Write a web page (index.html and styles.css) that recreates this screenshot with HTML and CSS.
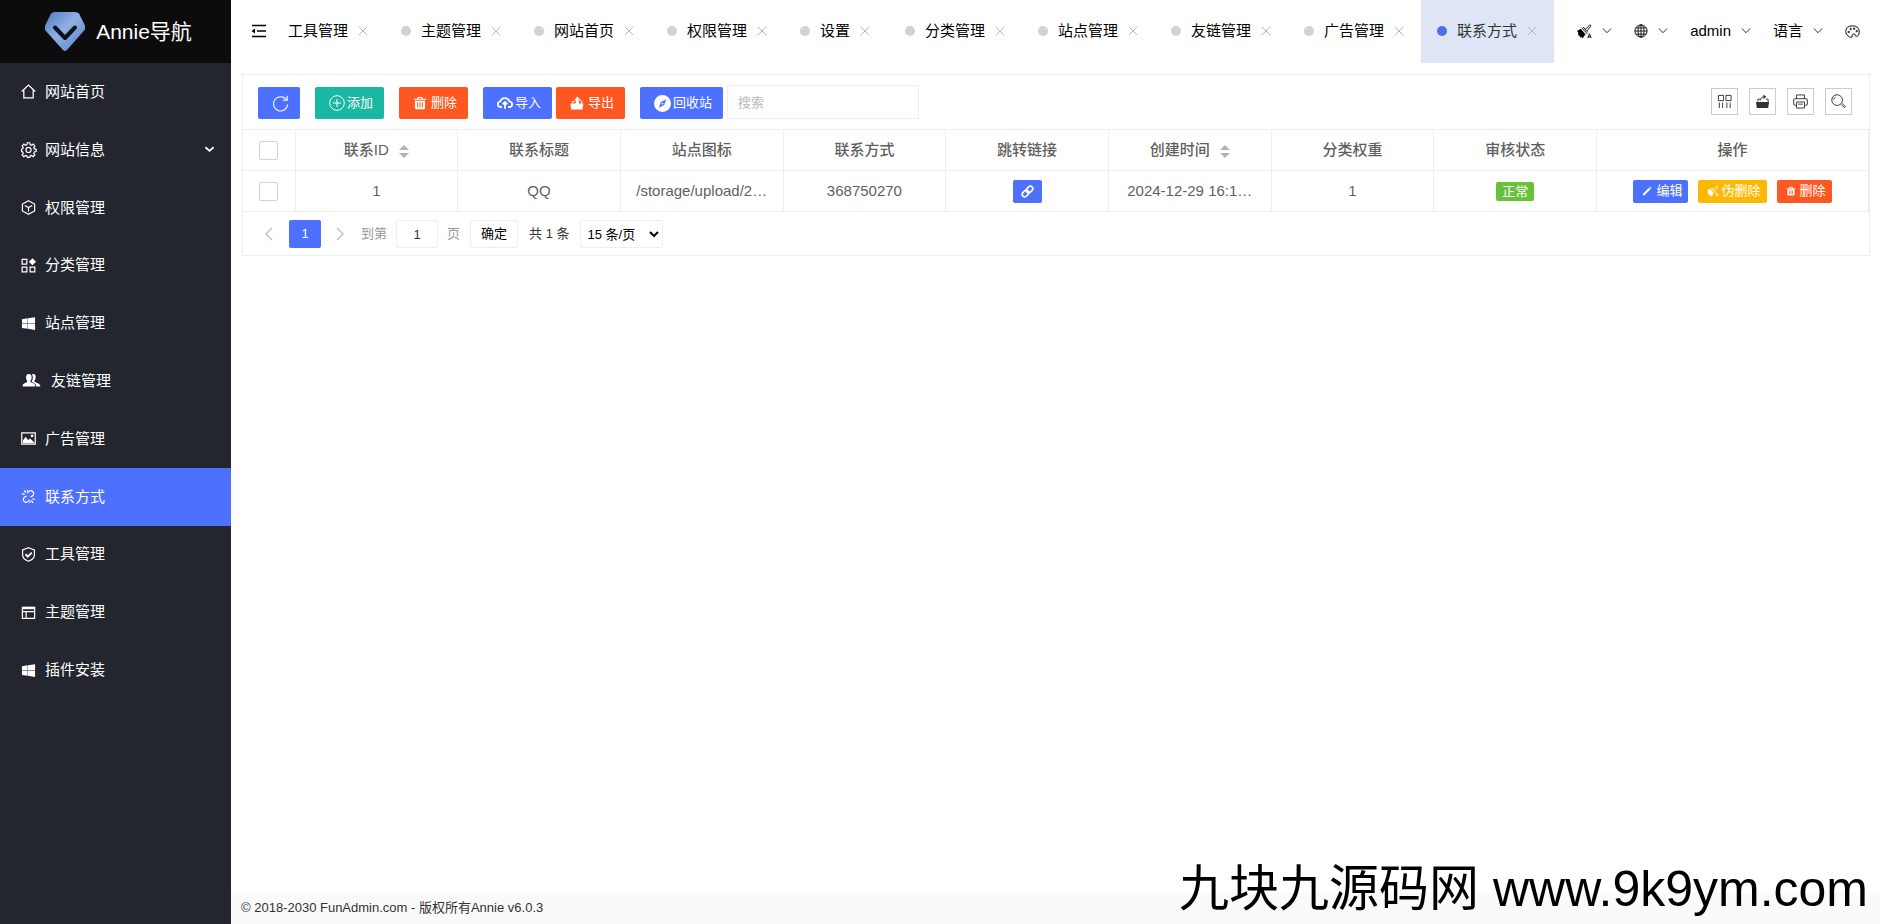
FILE: index.html
```html
<!DOCTYPE html>
<html lang="zh-CN">
<head>
<meta charset="utf-8">
<title>联系方式 - Annie导航</title>
<link rel="stylesheet" href="styles.css">
</head>
<body>
<svg class="sprite" aria-hidden="true">
  <defs>
    <linearGradient id="gem" x1="0" y1="0" x2="1" y2="1">
      <stop offset="0" stop-color="#4f78bd"/><stop offset=".45" stop-color="#8fb0e4"/><stop offset="1" stop-color="#5580c8"/>
    </linearGradient>
  </defs>
  <symbol id="i-close" viewBox="0 0 12 12"><path d="M1 1l10 10M11 1L1 11"/></symbol>
  <symbol id="i-down" viewBox="0 0 12 12"><path d="M1 3l5 5 5-5"/></symbol>
  <symbol id="i-win" viewBox="0 0 16 16"><path class="solid" d="M1 3.400l6-.9v5.200H1zM7.400 2.300L15 1.200v6.500H7.400zM1 8.200h6v5.400L1 12.700zM7.400 8.200H15v6.600l-7.600-1.200z"/></symbol>
  <symbol id="i-trash" viewBox="0 0 16 16"><path class="solid" fill-rule="evenodd" d="M5.500 1h5l.7 2H15v1.400H1V3h3.800zM6.600 2.200L6.300 3h3.400l-.3-.8zM2.200 5.300h11.600V14l-1 1H3.200l-1-1zM4.700 7v6h1.200V7zm2.700 0v6h1.200V7zm2.700 0v6h1.200V7z"/></symbol>
  <symbol id="i-export" viewBox="0 0 16 16"><path class="solid" d="M1 8.500h14.200v1.500l-1 5.500H1.500L.5 10z"/><path d="M3 9V6h2.500M11 5.500h2.500V9"/><path class="solid" d="M8.500.5l3.600 4H10v4.500H6.500V4.500H5z"/></symbol>
  <symbol id="i-brush" viewBox="0 0 16 16"><path class="solid" d="M0 7.500L4 5l5 6-3 4.500-1.500-2-.5 1.300-1.500-2.500-.8.8L1.500 11l-.7.300L1.400 9z"/><path d="M5 4l6 6.500M6.500 3.200l5 5.600M9 5.700L13.500 1q1.500 0 1 1.500L10.800 7.200"/><path d="M11.500 15l1.800-4.500L15 15M12 13.800h2.500"/></symbol>
</svg>

<div class="app">
  <aside class="sidebar">
    <a class="brand" href="#">
      <svg class="gem" viewBox="0 0 42 40"><path fill="url(#gem)" stroke="none" d="M10 0h22l3 1.500 6 12v4L23 38q-2 2-4 0L1 18v-4L7 1.500z"/><path class="tick" d="M11 15.500l10 10.500 10-10.500"/></svg>
      <span>Annie导航</span>
    </a>
    <nav class="menu">
      <a href="#"><svg class="ico" viewBox="0 0 16 16"><path d="M.8 8L8 1.200 15.200 8M3 6.500v8.300h10V6.500"/></svg><span>网站首页</span></a>
      <a href="#"><svg class="ico" viewBox="0 0 16 16"><path d="M6.700.8h2.600l.4 2 1.500.700 1.800-1.200 1.800 1.900-1.200 1.700.6 1.400 2 .4v2.500l-2 .4-.6 1.500 1.200 1.700-1.800 1.800-1.800-1.200-1.500.6-.4 1.500H6.700l-.4-1.500-1.500-.6L3 15.600l-1.800-1.800 1.200-1.700-.6-1.500-1.200-.4V7.700l1.200-.4.600-1.400L1.200 4.200 3 2.300l1.800 1.200 1.500-.7z"/><circle cx="8" cy="8.500" r="2.700"/></svg><span>网站信息</span><svg class="ico caret" viewBox="0 0 12 12"><path d="M1.500 3.500L6 7.500l4.500-4"/></svg></a>
      <a href="#"><svg class="ico" viewBox="0 0 16 16"><path d="M8 .8l6.500 3.500v7.400L8 15.200l-6.500-3.500V4.300zM4 5.800L8 8l4-2.200M8 8v4.500"/></svg><span>权限管理</span></a>
      <a href="#"><svg class="ico" viewBox="0 0 16 16"><path d="M1.200 1.500h5v5h-5zM1.200 9.700h5v5h-5zM9.700 9.700h5v5h-5z"/><path class="solid" d="M12.200.2L16 4l-3.800 3.800L8.400 4z"/></svg><span>分类管理</span></a>
      <a href="#"><svg class="ico"><use href="#i-win"/></svg><span>站点管理</span></a>
      <a class="wide" href="#"><svg class="ico" viewBox="0 0 20 16"><path class="solid" d="M1 14.500q0-3 2-3.500l3-1.500v-1Q4.700 7 4.700 4.700 4.700 1 7.700 1q3 0 3 3.700 0 2.300-1.300 3.800v1L12.500 11q2 .5 2 3.500zM11 1.200q4-1.200 4 3.200 0 2-1.300 3.600v1.300l3.300 1.500q3 .7 3 3.700h-4.500q0-3-2.300-3.800L11 9.300v-.7q2-4 0-7.400z"/></svg><span>友链管理</span></a>
      <a href="#"><svg class="ico" viewBox="0 0 16 16"><path d="M.8 2h14.400v12H.8z"/><path class="solid" d="M2 13v-3l3-4 2.500 3.500L9.700 8l4.300 4v1z"/><circle class="solid" cx="11.800" cy="5.200" r="1.400"/></svg><span>广告管理</span></a>
      <a class="on" href="#"><svg class="ico" viewBox="0 0 16 16"><path d="M7 4.500Q9 1 11.500 2q3 1.500 1.500 4.500-1 1.500-3 1.800M9 11.500Q7 15 4.500 14q-3-1.500-1.500-4.500Q4 8 6 7.700M1 5l3 .8M3.500 1.500L5.200 4M15 11.200l-3-.8M12.800 14.800L11 12.200M6.800 1l.1 2M9.500 15l-.1-2"/></svg><span>联系方式</span></a>
      <a href="#"><svg class="ico" viewBox="0 0 16 16"><path d="M8 .8l6.300 2.200v5.500q0 4.200-6.300 6.700-6.300-2.500-6.300-6.700V3z"/><path class="bold" d="M4.800 7.700l2.500 2.500 4.200-4.200"/></svg><span>工具管理</span></a>
      <a href="#"><svg class="ico" viewBox="0 0 16 16"><path d="M1.500 2.500h13v11.800h-13zM1.500 7h13M5.500 7v7"/><path class="solid" d="M1 2h14v2.500H1z"/></svg><span>主题管理</span></a>
      <a href="#"><svg class="ico"><use href="#i-win"/></svg><span>插件安装</span></a>
    </nav>
  </aside>

  <div class="page">
    <header class="topbar">
      <button class="fold" aria-label="收起菜单"><svg viewBox="0 0 16 14"><path d="M1 1.500h14M6 7h9M1 12.500h14"/><path class="solid" d="M.5 7L4 4.500v5z"/></svg></button>
      <nav class="tabs">
        <a href="#"><i></i>工具管理<svg class="x"><use href="#i-close"/></svg></a>
        <a href="#"><i></i>主题管理<svg class="x"><use href="#i-close"/></svg></a>
        <a href="#"><i></i>网站首页<svg class="x"><use href="#i-close"/></svg></a>
        <a href="#"><i></i>权限管理<svg class="x"><use href="#i-close"/></svg></a>
        <a href="#"><i></i>设置<svg class="x"><use href="#i-close"/></svg></a>
        <a href="#"><i></i>分类管理<svg class="x"><use href="#i-close"/></svg></a>
        <a href="#"><i></i>站点管理<svg class="x"><use href="#i-close"/></svg></a>
        <a href="#"><i></i>友链管理<svg class="x"><use href="#i-close"/></svg></a>
        <a href="#"><i></i>广告管理<svg class="x"><use href="#i-close"/></svg></a>
        <a class="on" href="#"><i></i>联系方式<svg class="x"><use href="#i-close"/></svg></a>
      </nav>
      <div class="tools">
        <button aria-label="清除缓存"><svg class="ico"><use href="#i-brush"/></svg><svg class="x"><use href="#i-down"/></svg></button>
        <button aria-label="站点"><svg class="ico globe" viewBox="0 0 16 16"><circle cx="8" cy="8" r="7"/><ellipse cx="8" cy="8" rx="3.500" ry="7"/><path d="M8 1v14M1 8h14M2 4.500h12M2 11.500h12"/></svg><svg class="x"><use href="#i-down"/></svg></button>
        <button>admin<svg class="x"><use href="#i-down"/></svg></button>
        <button>语言<svg class="x"><use href="#i-down"/></svg></button>
        <button aria-label="主题"><svg class="ico" viewBox="0 0 16 16"><path d="M3.500 13Q.8 11 .8 8q0-6 7.200-6 7.200 0 7.200 6.500 0 4-2.500 4.700-1.500.3-1.700-1-.3-2-2-1.700-1.500.3-1.300 2 .2 2-1.500 1.700-1.500-.2-2.700-1.200z"/><circle cx="4" cy="8.500" r=".8"/><circle cx="6" cy="5.300" r=".8"/><circle cx="9.700" cy="5" r=".8"/><circle cx="12.500" cy="7.500" r=".8"/></svg></button>
      </div>
    </header>

    <main>
      <section class="card">
        <div class="toolbar">
          <button class="btn blue" aria-label="刷新"><svg class="big" viewBox="0 0 16 16"><path d="M13.500 4.500A6.700 6.700 0 1 0 14.700 9M14.300.8v4.200h-4.200"/></svg></button>
          <button class="btn teal"><svg viewBox="0 0 16 16"><circle cx="8" cy="8" r="7.300"/><path d="M8 4v8M4 8h8"/></svg>添加</button>
          <button class="btn red"><svg class="mid"><use href="#i-trash"/></svg>删除</button>
          <div class="pair">
            <button class="btn blue"><svg viewBox="0 0 18 16"><path class="mid-line" d="M5.500 12.500H4.300Q1 12.300 1 9.300q0-2.500 2.800-3 1-3.800 5-3.800t5 3.800q3.200.5 3.200 3 0 3-3.300 3.200h-1.200M9 14.500V7.200M6.300 9.500L9 6.800l2.700 2.700"/></svg>导入</button>
            <button class="btn red"><svg class="mid"><use href="#i-export"/></svg>导出</button>
          </div>
          <div class="pair">
            <button class="btn blue"><svg class="big" viewBox="0 0 16 16"><path class="solid" fill-rule="evenodd" d="M8 0a8 8 0 1 1 0 16A8 8 0 0 1 8 0zM11.500 4L6.500 6.600 4.600 12l5-2.600zM8 7.200a.9.9 0 1 1 0 1.800.9.9 0 0 1 0-1.800z"/></svg>回收站</button>
            <input class="search" type="text" placeholder="搜索" aria-label="搜索">
          </div>
          <div class="actions">
            <button aria-label="筛选列"><svg viewBox="0 0 16 16"><path d="M1.500 1.500h5.500v5.500H1.500zM9.500 1.500H15v5.500H9.500zM2.500 9v6M6 9v6M10.500 9v6M14 9v6"/></svg></button>
            <button aria-label="导出"><svg viewBox="0 0 16 16"><path class="solid" d="M1 8.500h14l-1 6.500H2z"/><path d="M3 8V5.500h2.500M11.500 5.500H14v3M5.500 7q.5-4 4-4.200"/><path class="solid" d="M9 .5l3 2.500-3 2.500z"/></svg></button>
            <button aria-label="打印"><svg viewBox="0 0 16 16"><path d="M3.800 5V1h8.400v4M3.800 12H2q-1.300 0-1.300-1.300V6.300Q.7 5 2 5h12q1.300 0 1.300 1.300v4.400Q15.300 12 14 12h-1.800M3.800 8.500h8.400V15H3.800zM5.500 10.800h5"/></svg></button>
            <button aria-label="搜索"><svg viewBox="0 0 16 16"><circle cx="6.500" cy="6.500" r="5.700"/><path d="M10.800 11.200l3.400 3.400 1.200-1.100-3.500-3.300M2.800 6q.3-2 2-2.800"/></svg></button>
          </div>
        </div>

        <table>
          <colgroup><col class="c-check"><col><col><col><col><col><col><col><col><col class="c-ops"></colgroup>
          <thead>
            <tr>
              <th><input type="checkbox" aria-label="全选"></th>
              <th>联系ID<span class="sort"></span></th>
              <th>联系标题</th><th>站点图标</th><th>联系方式</th><th>跳转链接</th>
              <th>创建时间<span class="sort"></span></th>
              <th>分类权重</th><th>审核状态</th><th>操作</th>
            </tr>
          </thead>
          <tbody>
            <tr>
              <td><input type="checkbox" aria-label="选择此行"></td>
              <td>1</td><td>QQ</td><td>/storage/upload/2…</td><td>368750270</td>
              <td><a class="mini blue link" href="#" aria-label="跳转链接"><svg viewBox="0 0 16 16"><g transform="rotate(-45 8 8)"><rect x="0" y="5" width="9" height="6" rx="3"/><rect x="7" y="5" width="9" height="6" rx="3"/></g></svg></a></td>
              <td>2024-12-29 16:1…</td><td>1</td>
              <td><span class="tag">正常</span></td>
              <td><div class="ops">
                <button class="mini blue"><svg viewBox="0 0 12 12"><path class="solid" d="M1.500 9L8.300 2.200l1.800 1.800-6.800 6.800-2.500.7zM9 1.500l.8-.8 1.800 1.800-.8.8z"/></svg>编辑</button>
                <button class="mini amber"><svg viewBox="0 0 16 16"><use href="#i-brush"/></svg>伪删除</button>
                <button class="mini red"><svg viewBox="0 0 12 12"><use href="#i-trash" width="12" height="12"/></svg>删除</button>
              </div></td>
            </tr>
          </tbody>
        </table>

        <div class="pager">
          <button class="arrow" aria-label="上一页"><svg viewBox="0 0 12 12"><path d="M9 0L3 6l6 6"/></svg></button>
          <button class="num">1</button>
          <button class="arrow" aria-label="下一页"><svg viewBox="0 0 12 12"><path d="M3 0l6 6-6 6"/></svg></button>
          <label class="goto">到第<input type="text" value="1">页</label>
          <button class="ok">确定</button>
          <span class="total">共 1 条</span>
          <select aria-label="每页条数"><option>15 条/页</option></select>
        </div>
      </section>
    </main>

    <footer>© 2018-2030 FunAdmin.com - 版权所有Annie v6.0.3</footer>
  </div>
</div>
<p class="watermark">九块九源码网 www.9k9ym.com</p>
</body>
</html>
```
FILE: styles.css
```css
* { box-sizing: border-box; }
body {
  margin: 0;
  font: 15px/20px "Liberation Sans", "Noto Sans CJK SC", sans-serif;
  color: #000;
  background: #fff;
}
a { color: inherit; text-decoration: none; }
button { font: inherit; color: inherit; padding: 0; border: 0; background: none; cursor: pointer; }
svg { fill: none; stroke: currentColor; flex: none; overflow: visible; }
.solid { fill: currentColor; stroke: none; }
.bold { stroke-width: 2; }
.mid-line { stroke-width: 2; }
.sprite { position: absolute; width: 0; height: 0; }
.ico { width: 15px; height: 15px; }
.x { width: 10px; height: 10px; }

.app { display: flex; min-height: 100vh; }

/* Sidebar */
.sidebar { flex: none; width: 231px; background: #23262e; color: #fff; }
.brand {
  display: flex; align-items: center; justify-content: center; gap: 10px;
  height: 63px; padding: 0 0 0 5px;
  background: #0c0c0c; font-size: 21px;
}
.gem { width: 42px; height: 40px; }
.tick { stroke: #0c0f18; stroke-width: 4; stroke-linecap: round; stroke-linejoin: round; }
.menu { display: grid; grid-auto-rows: 1fr; min-height: 636px; }
.menu a { display: flex; align-items: center; gap: 9px; padding: 0 16px 0 21px; }
.menu .ico { stroke-width: 1.3; }
.menu .on { background: #4e70ff; }
.menu .wide .ico { width: 20px; margin-right: 1px; }
.menu .caret { width: 11px; height: 11px; margin-left: auto; stroke-width: 2; }

/* Top bar */
.page { flex: 1; min-width: 0; display: flex; flex-direction: column; }
.topbar { display: flex; height: 63px; }
.fold { flex: none; width: 51px; padding: 0 14px 2px 20px; }
.fold svg { display: block; width: 16px; height: 14px; stroke-width: 1.5; }
.tabs { flex: 1; min-width: 0; display: flex; justify-content: flex-end; overflow: hidden; }
.tabs a {
  flex: none; display: flex; align-items: center; gap: 10px;
  min-width: 105px; padding: 0 17px 1px 16px; white-space: nowrap;
}
.tabs i { width: 10px; height: 10px; border-radius: 50%; background: #d2d2d2; }
.tabs .x { color: #aaa; }
.tabs .on { background: #dee5f5; color: #333; }
.tabs .on i { background: #4e70e8; }
.tools { flex: none; display: flex; gap: 22px; padding: 0 20px 1px 23px; }
.tools button { display: flex; align-items: center; gap: 10px; }
.tools .globe { width: 14px; height: 14px; }

/* Card */
main { flex: 1; padding: 11px 10px 11px 11px; }
.card { border: 1px solid #eee; }
.toolbar { display: flex; align-items: flex-end; gap: 15px; padding: 10px 17px 10px 15px; }
.pair { display: flex; align-items: flex-end; gap: 4px; }
.blue { background: #4e70ff; }
.teal { background: #1ab7a5; }
.red { background: #ff5722; }
.amber { background: #ffb800; }
.btn {
  display: flex; align-items: center; justify-content: center; gap: 2px;
  height: 32px; padding: 0 11px 0 14px; border-radius: 2px;
  color: #fff; font-size: 13px;
}
.btn svg { width: 16px; height: 16px; }
.btn .mid { width: 14px; height: 14px; margin-right: 2px; }
.btn .big { width: 17px; height: 17px; }
.search {
  width: 192px; height: 34px; padding: 0 10px;
  border: 1px solid #eee; font: inherit; font-size: 13px;
}
.search::placeholder { color: #bbb; }
.actions { display: flex; gap: 11px; margin-left: auto; padding-bottom: 4px; color: #333; }
.actions button { display: grid; place-items: center; width: 27px; height: 27px; border: 1px solid #ccc; }
.actions svg { width: 15px; height: 15px; }

table { width: 100%; table-layout: fixed; border-collapse: collapse; color: #5f5f5f; }
.c-check { width: 52px; }
.c-ops { width: 272px; }
th, td {
  height: 41px; padding: 0 15px; border: 1px solid #eee;
  text-align: center; font-weight: normal; white-space: nowrap;
}
th { font-weight: 500; }
tr > :first-child { border-left: 0; padding: 0; }
tr > :last-child { padding: 0; }
input[type="checkbox"] {
  appearance: none; display: block; width: 19px; height: 19px; margin: 0 auto 0 16px;
  border: 1px solid #d2d2d2; border-radius: 2px; background: #fff;
}
.sort { display: inline-grid; gap: 3px; margin-left: 10px; vertical-align: middle; }
.sort::before, .sort::after { content: ""; border: 5px solid transparent; }
.sort::before { border-top: 0; border-bottom-color: #b2b2b2; }
.sort::after { border-bottom: 0; border-top-color: #b2b2b2; }
.mini {
  display: inline-flex; align-items: center; justify-content: center; gap: 4px;
  height: 23px; padding: 0 6px 0 9px; border-radius: 2px;
  color: #fff; font-size: 13px; vertical-align: middle;
}
.mini svg { width: 10px; height: 10px; }
.link { width: 29px; padding: 0; }
.link svg { width: 13px; height: 13px; stroke-width: 2; }
.amber { gap: 2px; }
.amber svg { width: 12px; height: 12px; }
.ops { display: flex; justify-content: center; gap: 10px; }
.tag {
  display: inline-block; padding: 0 6px; border-radius: 2px;
  background: #67c23a; color: #fff; font-size: 13px; line-height: 19px; vertical-align: middle;
}

.pager { display: flex; align-items: center; padding: 8px 16px 7px; height: 43px; font-size: 13px; }
.arrow { width: 20px; color: #c2c2c2; }
.arrow svg { display: block; width: 12px; height: 12px; margin: 0 auto; stroke-width: 1.5; }
.num { width: 32px; height: 28px; margin: 0 9px 0 10px; border-radius: 2px; background: #4e70ff; color: #fff; }
.goto { display: flex; align-items: center; gap: 9px; margin-left: 11px; color: #999; }
.goto input {
  width: 42px; height: 28px; padding: 0; border: 1px solid #eee; border-radius: 2px;
  font: inherit; color: #333; text-align: center;
}
.ok { height: 28px; margin: 0 11px 0 10px; padding: 0 10px; border: 1px solid #eee; border-radius: 2px; }
.total { color: #333; }
.pager select {
  width: 83px; height: 28px; margin-left: 10px; padding: 0 0 0 3px;
  border: 1px solid #eee; border-radius: 2px; background: #fff; font: inherit; color: #000;
}

footer { padding: 5px 10px 6px; background: #fafafa; color: #333; font-size: 13px; }

.watermark {
  position: fixed; right: 12px; bottom: 1px; margin: 0;
  font-size: 50px; line-height: 68px; white-space: nowrap;
}
```
